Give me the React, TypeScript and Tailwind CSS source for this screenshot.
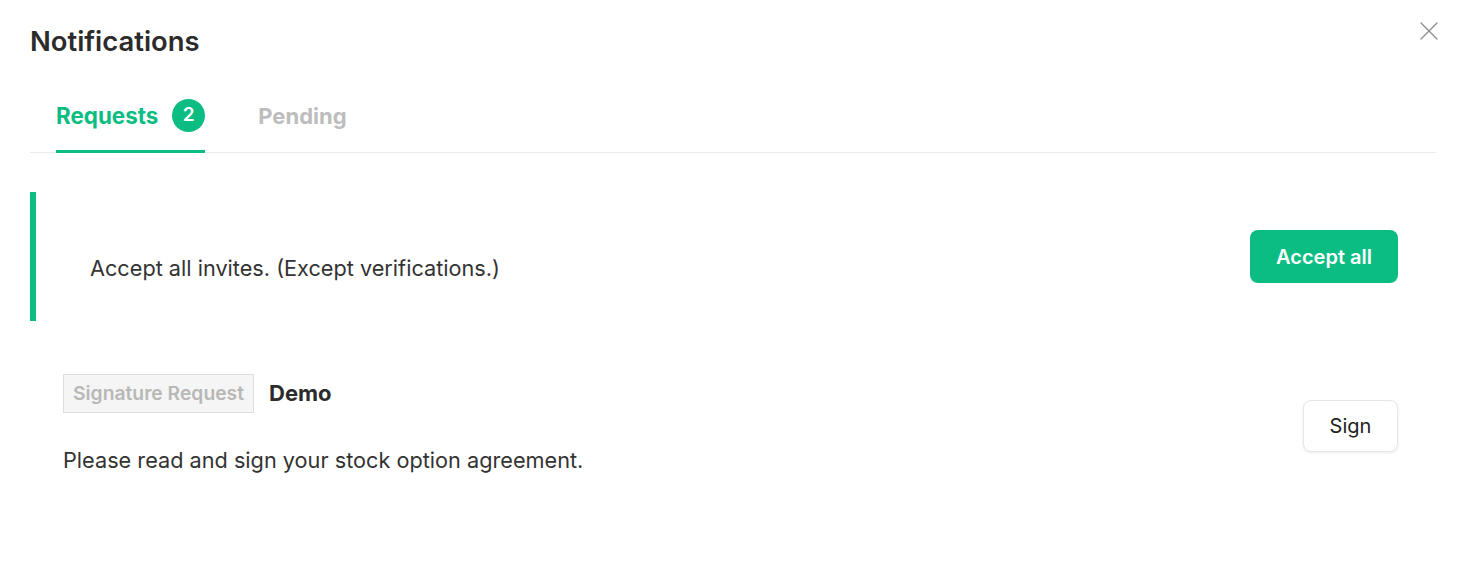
import { X } from "lucide-react";

const GREEN = "bg-[#0bbd83]";

function Tabs() {
  return (
    <div className="mt-[37px] flex items-end gap-[53px] border-b border-[#ebebeb] pl-[26px]">
      <button className="-mb-px flex h-[57px] items-center gap-[14px] border-b-[3px] border-[#0bbd83] pb-[15px]">
        <span className="text-[22.4px] font-bold text-[#0bbd83]">Requests</span>
        <span className={`${GREEN} flex h-[33px] w-[33px] items-center justify-center rounded-full text-[19px] font-semibold text-white`}>
          2
        </span>
      </button>
      <button className="flex h-[57px] items-center pb-[15px]">
        <span className="text-[22px] font-bold text-[#bdbdbd]">Pending</span>
      </button>
    </div>
  );
}

export default function App() {
  return (
    <div
      className="relative min-h-[562px] w-full bg-white pl-[30px] pr-[27px] pt-[24px] text-[#2b2b2b]"
      style={{ fontFamily: "Inter, 'Noto Sans', sans-serif" }}
    >
      <h1 className="text-[27.4px] font-semibold leading-[34px] text-[#2b2b2b]">Notifications</h1>
      <button className="absolute right-[18px] top-[15px] text-[#8c8c8c]">
        <X size={32} strokeWidth={0.95} />
      </button>

      <Tabs />

      {/* bulk accept */}
      <div className="mt-[39px] flex h-[129px] items-center justify-between border-l-[6px] border-[#0bbd83] pl-[54px] pr-[38px]">
        <p className="mt-[24px] text-[21.7px] text-[#333]">Accept all invites. (Except verifications.)</p>
        <button className={`${GREEN} h-[53px] w-[148px] rounded-[8px] text-[20px] font-semibold text-white`}>
          Accept all
        </button>
      </div>

      {/* request item */}
      <div className="mt-[53px] flex items-center justify-between pl-[33px] pr-[38px]">
        <div className="flex flex-col gap-[31px]">
          <div className="flex items-center gap-[15px]">
            <span className="flex h-[39px] items-center border border-[#dedede] bg-[#f5f5f5] px-[9px] text-[19.3px] font-semibold text-[#b8b8b8]">
              Signature Request
            </span>
            <span className="text-[22px] font-bold text-[#2b2b2b]">Demo</span>
          </div>
          <p className="text-[21.7px] text-[#333]">Please read and sign your stock option agreement.</p>
        </div>
        <button className="mt-[2px] h-[52px] w-[95px] rounded-[8px] border border-[#e6e6e6] bg-white text-[20px] text-[#222] shadow-[0_1px_3px_rgba(0,0,0,0.08)]">
          Sign
        </button>
      </div>
    </div>
  );
}
